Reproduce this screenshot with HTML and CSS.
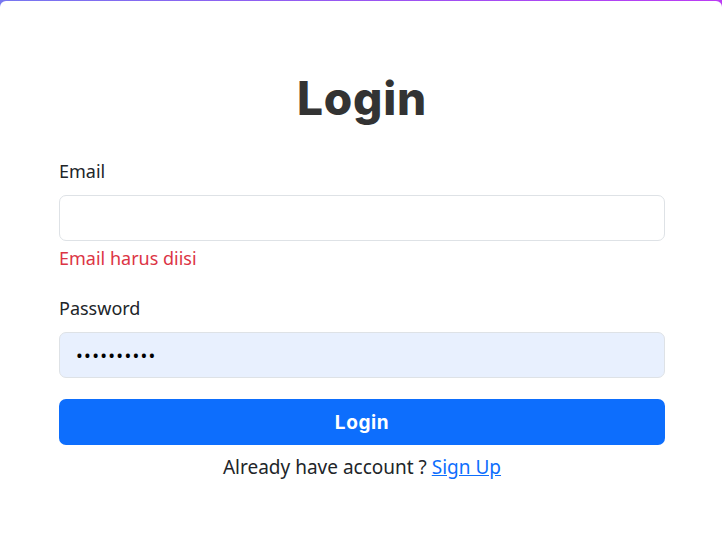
FILE: index.html
```html
<!DOCTYPE html>
<html lang="id">
<head>
<meta charset="utf-8">
<title>Login</title>
<link rel="stylesheet" href="styles.css">
</head>
<body>
<div class="card">
  <h1 class="title">Login</h1>
  <form class="form">
    <div class="group">
      <label class="label" for="email">Email</label>
      <input class="field" id="email" type="email">
      <div class="error">Email harus diisi</div>
    </div>
    <div class="group">
      <label class="label" for="pw">Password</label>
      <input class="field field-filled" id="pw" type="password" value="1234567890">
    </div>
    <button class="btn" type="button">Login</button>
    <p class="foot">Already have account ? <a class="link" href="#">Sign Up</a></p>
  </form>
</div>
</body>
</html>
```

FILE: styles.css
```css
html, body {
  margin: 0;
  padding: 0;
  height: 100%;
}
body {
  background: linear-gradient(90deg, #7777f0 0%, #a050f2 60%, #bb3cf4 100%);
  font-family: "Noto Sans", "Open Sans", sans-serif;
  color: #212529;
  overflow: hidden;
}
.card {
  margin-top: 1px;
  height: 548px;
  background: #fff;
  border-radius: 6px;
  padding: 69px 57px 0 59px;
  box-sizing: border-box;
}
.title {
  margin: 0 0 31px;
  text-align: center;
  font-family: "Inter", sans-serif;
  font-weight: 800;
  font-size: 46px;
  line-height: 56px;
  color: #333;
  letter-spacing: 0.8px;
}
.form {
  display: flex;
  flex-direction: column;
}
.group {
  display: flex;
  flex-direction: column;
  margin-bottom: 21px;
}
.label {
  font-size: 18px;
  line-height: 28px;
  margin-bottom: 10px;
}
.field {
  height: 46px;
  box-sizing: border-box;
  border: 1px solid #dee2e6;
  border-radius: 7px;
  background: #fff;
  padding: 0 16px;
  font-size: 18px;
  font-family: inherit;
  outline: none;
}
.field-filled {
  background: #e8f0fe;
  color: #000;
  letter-spacing: 1.3px;
}
.error {
  color: #dc3545;
  font-size: 18px;
  line-height: 28px;
  margin-top: 3px;
  margin-bottom: 1px;
}
.btn {
  height: 46px;
  border: none;
  border-radius: 7px;
  background: #0d6efd;
  color: #fff;
  font-family: "Inter", sans-serif;
  font-weight: 700;
  font-size: 19px;
  letter-spacing: 0.6px;
}
.foot {
  margin: 8px 0 0;
  text-align: center;
  font-size: 19px;
  line-height: 28px;
}
.link {
  color: #0d6efd;
}
```
